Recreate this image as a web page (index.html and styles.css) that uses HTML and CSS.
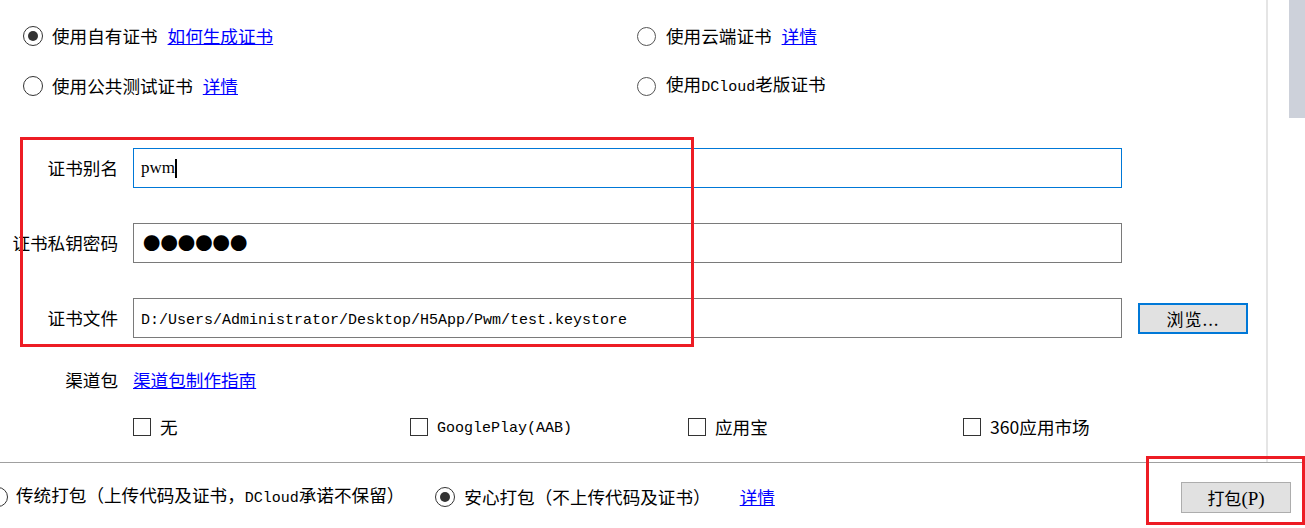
FILE: index.html
```html
<!DOCTYPE html>
<html lang="zh-CN">
<head>
  <meta charset="utf-8">
  <title>打包设置</title>
  <link rel="stylesheet" href="styles.css">
</head>
<body>
  <div class="page">
    <div class="top">
      <div class="content">
        <div class="certs">
          <div class="opt"><span class="radio checked"></span><span class="txt">使用自有证书<a class="link" href="#">如何生成证书</a></span></div>
          <div class="opt right"><span class="radio"></span><span class="txt">使用云端证书<a class="link" href="#">详情</a></span></div>
          <div class="opt"><span class="radio"></span><span class="txt">使用公共测试证书<a class="link" href="#">详情</a></span></div>
          <div class="opt right"><span class="radio"></span><span class="txt">使用<span class="mono">DCloud</span>老版证书</span></div>
        </div>

        <div class="fields">
          <div class="field">
            <span class="lbl">证书别名</span>
            <div class="box focus"><span class="serif">pwm</span><span class="caret"></span></div>
          </div>
          <div class="field">
            <span class="lbl">证书私钥密码</span>
            <div class="box"><span class="dots">●●●●●●</span></div>
          </div>
          <div class="field">
            <span class="lbl">证书文件</span>
            <div class="box"><span class="mono path">D:/Users/Administrator/Desktop/H5App/Pwm/test.keystore</span></div>
            <button class="btn btn-browse">浏览...</button>
          </div>
        </div>

        <div class="channel">
          <span class="lbl">渠道包</span>
          <a class="link" href="#">渠道包制作指南</a>
        </div>
        <div class="checks">
          <div class="chk"><span class="cbox"></span><span class="txt">无</span></div>
          <div class="chk"><span class="cbox"></span><span class="txt"><span class="mono">GooglePlay(AAB)</span></span></div>
          <div class="chk"><span class="cbox"></span><span class="txt">应用宝</span></div>
          <div class="chk"><span class="cbox"></span><span class="txt">360应用市场</span></div>
        </div>
      </div>
      <div class="vline"></div>
      <div class="track"><div class="thumb"></div></div>
    </div>

    <div class="bottom">
      <div class="opt first"><span class="radio"></span><span class="txt">传统打包（上传代码及证书，<span class="mono">DCloud</span>承诺不保留）</span></div>
      <div class="opt"><span class="radio checked"></span><span class="txt">安心打包（不上传代码及证书）</span></div>
      <a class="link more" href="#">详情</a>
      <button class="btn btn-pack">打包<span class="serif">(P)</span></button>
    </div>

    <div class="mark mark-form"></div>
    <div class="mark mark-pack"></div>
  </div>
</body>
</html>
```

FILE: styles.css
```css
body {
  margin: 0;
  background-color: #FFFFFF;
  color: #000000;
  font-family: "Noto Sans CJK SC", "Microsoft YaHei", sans-serif;
  font-size: 17.6px;
  line-height: 24px;
  overflow: hidden;
}
.page {
  position: relative;
  width: 1305px;
  height: 528px;
  display: flex;
  flex-direction: column;
}
.top {
  display: flex;
  height: 462px;
}
.content {
  width: 1266px;
}
.vline {
  width: 2px;
  background-color: #E5E5E5;
}
.track {
  flex: 1;
  display: flex;
  justify-content: flex-end;
}
.thumb {
  width: 16px;
  height: 118px;
  background-color: #CDD1DA;
}

/* radio options */
.certs {
  display: grid;
  grid-template-columns: 614px auto;
  grid-auto-rows: 50px;
  padding: 11px 0 0 23px;
}
.opt {
  display: flex;
  align-items: center;
  white-space: nowrap;
}
.txt {
  white-space: nowrap;
}
.radio {
  width: 20px;
  height: 20px;
  box-sizing: border-box;
  border: 1.5px solid #333333;
  border-radius: 50%;
  margin-right: 9px;
  display: flex;
  align-items: center;
  justify-content: center;
  flex: none;
}
.radio.checked::after {
  content: "";
  width: 10px;
  height: 10px;
  border-radius: 50%;
  background-color: #333333;
}
.opt.right .radio {
  width: 19px;
  height: 19px;
  border-color: #555555;
  margin-right: 10px;
}
.link {
  color: #0000FF;
  text-decoration: underline;
  margin-left: 10px;
}
.mono {
  font-family: "Liberation Mono", monospace;
  font-size: 15px;
}
.serif {
  font-family: "Liberation Serif", serif;
}

/* form fields */
.fields {
  margin-top: 37px;
  display: flex;
  flex-direction: column;
  gap: 35px;
}
.field {
  display: flex;
  align-items: center;
}
.lbl {
  width: 118px;
  text-align: right;
  margin-right: 15px;
  white-space: nowrap;
}
.box {
  width: 989px;
  height: 40px;
  box-sizing: border-box;
  border: 1px solid #7A7A7A;
  padding-left: 7px;
  display: flex;
  align-items: center;
}
.box.focus {
  border-color: #0078D7;
}
.box .serif {
  font-size: 17px;
}
.box .path {
  padding-top: 6px;
}
.caret {
  width: 2px;
  height: 19px;
  background-color: #000000;
}
.dots {
  font-size: 17.4px;
  margin-left: 2px;
}
.btn {
  font-family: "Noto Sans CJK SC", sans-serif;
  font-size: 17px;
  color: #000000;
  background-color: #E1E1E1;
  box-sizing: border-box;
  padding: 0;
  height: 31px;
  width: 110px;
}
.btn-browse {
  margin-left: 16px;
  border: 2px solid #0078D7;
  letter-spacing: 1px;
}

/* channel */
.channel {
  display: flex;
  align-items: center;
  margin-top: 30px;
}
.channel .link {
  margin-left: 0;
}
.checks {
  display: grid;
  grid-template-columns: 277px 278px 275px auto;
  padding-left: 133px;
  margin-top: 21px;
}
.chk {
  display: flex;
  align-items: center;
  white-space: nowrap;
}
.cbox {
  width: 18px;
  height: 18px;
  box-sizing: border-box;
  border: 1px solid #333333;
  margin-right: 9px;
  flex: none;
}

/* bottom bar */
.bottom {
  flex: 1;
  border-top: 1px solid #A0A0A0;
  display: flex;
  align-items: center;
  padding-top: 3px;
}
.bottom .first {
  margin-left: -12px;
  margin-right: 31px;
}
.bottom .first .radio {
  margin-right: 8px;
}
.bottom .more {
  margin-left: 29px;
}
.btn-pack {
  margin-left: auto;
  margin-right: 14px;
  border: 1px solid #ADADAD;
}
.btn-pack .serif {
  font-size: 19px;
}

/* annotation boxes */
.mark {
  position: absolute;
  border: 3px solid #ED1C24;
  box-sizing: border-box;
}
.mark-form {
  left: 20px;
  top: 137px;
  width: 674px;
  height: 210px;
}
.mark-pack {
  left: 1146px;
  top: 456px;
  width: 159px;
  height: 69px;
}
```
